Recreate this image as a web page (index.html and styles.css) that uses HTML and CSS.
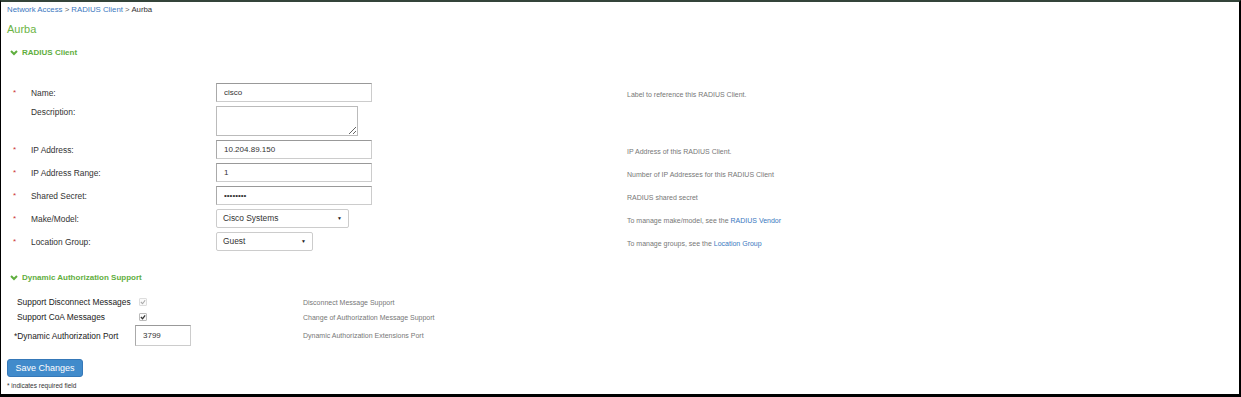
FILE: index.html
```html
<!DOCTYPE html>
<html lang="en">
<head>
  <meta charset="UTF-8" />
  <title>RADIUS Client - Aurba</title>
  <link rel="stylesheet" href="styles.css">
</head>
<body>
  <div class="frame">
    <div class="page">
      <div class="crumbs">
        <a href="#">Network Access</a> &gt; <a href="#">RADIUS Client</a> &gt; <span class="current">Aurba</span>
      </div>
      <h1 class="title">Aurba</h1>

      <!-- RADIUS client section -->
      <h2 class="section">
        <svg class="chev" width="8" height="6" viewBox="0 0 8 6"><path d="M1 1 L4 4 L7 1" fill="none" stroke="#5fae3e" stroke-width="2"/></svg>
        RADIUS Client
      </h2>

      <div class="form-grid">
        <span class="req">*</span>
        <label class="lbl">Name:</label>
        <div class="ctl"><input class="field w156" type="text" value="cisco"></div>
        <div class="help">Label to reference this RADIUS Client.</div>

        <span class="req"></span>
        <label class="lbl top">Description:</label>
        <div class="ctl"><textarea class="field area"></textarea></div>
        <div class="help"></div>

        <span class="req">*</span>
        <label class="lbl">IP Address:</label>
        <div class="ctl"><input class="field w156" type="text" value="10.204.89.150"></div>
        <div class="help">IP Address of this RADIUS Client.</div>

        <span class="req">*</span>
        <label class="lbl">IP Address Range:</label>
        <div class="ctl"><input class="field w156" type="text" value="1"></div>
        <div class="help">Number of IP Addresses for this RADIUS Client</div>

        <span class="req">*</span>
        <label class="lbl">Shared Secret:</label>
        <div class="ctl"><input class="field w156" type="password" value="cisco123"></div>
        <div class="help">RADIUS shared secret</div>

        <span class="req">*</span>
        <label class="lbl">Make/Model:</label>
        <div class="ctl"><div class="select w133">Cisco Systems<span class="arrow">&#9660;</span></div></div>
        <div class="help">To manage make/model, see the <a href="#">RADIUS Vendor</a></div>

        <span class="req">*</span>
        <label class="lbl">Location Group:</label>
        <div class="ctl"><div class="select w97">Guest<span class="arrow">&#9660;</span></div></div>
        <div class="help">To manage groups, see the <a href="#">Location Group</a></div>
      </div>

      <!-- Dynamic authorization section -->
      <h2 class="section das-head">
        <svg class="chev" width="8" height="6" viewBox="0 0 8 6"><path d="M1 1 L4 4 L7 1" fill="none" stroke="#5fae3e" stroke-width="2"/></svg>
        Dynamic Authorization Support
      </h2>

      <div class="das-grid">
        <div class="das-lbl">Support Disconnect Messages</div>
        <div class="das-ctl"><span class="check disabled"><svg width="7" height="6" viewBox="0 0 7 6"><path d="M1 3 L3 5 L6 1" fill="none" stroke="#aaa" stroke-width="1.3"/></svg></span></div>
        <div class="das-help">Disconnect Message Support</div>

        <div class="das-lbl">Support CoA Messages</div>
        <div class="das-ctl"><span class="check"><svg width="7" height="6" viewBox="0 0 7 6"><path d="M1 3 L3 5 L6 1" fill="none" stroke="#333" stroke-width="1.4"/></svg></span></div>
        <div class="das-help">Change of Authorization Message Support</div>

        <div class="das-lbl port">*Dynamic Authorization Port</div>
        <div class="das-ctl"><input class="field port-in" type="text" value="3799"></div>
        <div class="das-help">Dynamic Authorization Extensions Port</div>
      </div>

      <button class="btn">Save Changes</button>
      <p class="note">* indicates required field</p>
    </div>
  </div>
</body>
</html>
```

FILE: styles.css
```css
/* Reset */
* {
  margin: 0;
  padding: 0;
  box-sizing: border-box;
}

body {
  font-family: 'Liberation Sans', Arial, sans-serif;
  color: #333;
  background: #fff;
}

a {
  color: #3a78c0;
  text-decoration: none;
}

/* Screenshot frame */
.frame {
  width: 1241px;
  height: 397px;
  border-top: 2px solid #34443a;
  border-left: 1px solid #000;
  border-right: 2px solid #000;
  border-bottom: 3px solid #000;
  overflow: hidden;
}
.page {
  padding: 2px 6px 0;
}

/* Header */
.crumbs {
  font-size: 7.8px;
  line-height: 12px;
  color: #666;
}
.crumbs .current { color: #333; }

.title {
  margin-top: 6px;
  font-size: 11px;
  line-height: 14px;
  font-weight: normal;
  color: #6cb446;
}

.section {
  display: flex;
  align-items: center;
  gap: 4px;
  margin-top: 11px;
  padding-left: 3px;
  font-size: 8px;
  line-height: 12px;
  font-weight: bold;
  color: #5fae3e;
}
.chev { flex: none; }

/* RADIUS client form */
.form-grid {
  display: grid;
  grid-template-columns: 24px 185px 411px 1fr;
  row-gap: 4px;
  margin-top: 24px;
  align-items: center;
}
.req {
  padding-left: 6px;
  font-size: 8px;
  color: #c33;
  align-self: center;
}
.lbl {
  font-size: 8.4px;
  color: #333;
}
.lbl.top {
  align-self: start;
  padding-top: 1px;
}
.help {
  padding-top: 3px;
  font-size: 7px;
  color: #777;
  white-space: nowrap;
}

.field {
  display: block;
  height: 19px;
  border: 1px solid #ccc;
  border-top-color: #999;
  border-left-color: #aaa;
  padding: 0 7px;
  font-family: inherit;
  font-size: 8px;
  color: #333;
  background: #fff;
  outline: none;
}
.w156 { width: 156px; }
.area {
  width: 142px;
  height: 30px;
  resize: both;
  border-color: #bbb;
}

.select {
  position: relative;
  height: 19px;
  border: 1px solid #ccc;
  border-radius: 2px;
  padding-left: 6px;
  font-size: 8.4px;
  line-height: 17px;
  color: #333;
  background: #fff;
}
.w133 { width: 133px; }
.w97 { width: 97px; }
.arrow {
  position: absolute;
  right: 6px;
  top: 0;
  font-size: 5px;
  color: #222;
}

/* Dynamic authorization */
.das-head { margin-top: 21px; }

.das-grid {
  display: grid;
  grid-template-columns: 128px 168px 1fr;
  grid-template-rows: 14px 14px 21px;
  row-gap: 1px;
  margin-top: 11px;
  align-items: center;
}
.das-lbl {
  padding-left: 10px;
  font-size: 8.4px;
  color: #222;
  white-space: nowrap;
}
.das-lbl.port { padding-left: 7px; }
.das-help {
  font-size: 7px;
  color: #777;
  white-space: nowrap;
}
.das-ctl { display: flex; align-items: center; }

.check {
  display: flex;
  align-items: center;
  justify-content: center;
  width: 8px;
  height: 8px;
  margin-left: 4px;
  border: 1px solid #bbb;
  border-radius: 1px;
  background: #fafafa;
}
.check.disabled { border-color: #ddd; }

.port-in {
  width: 56px;
  height: 21px;
}

/* Footer */
.btn {
  display: block;
  margin-top: 13px;
  width: 76px;
  height: 18px;
  border: 1px solid #3578b8;
  border-radius: 3px;
  background: #418bcb;
  color: #fff;
  font-family: inherit;
  font-size: 9px;
}
.note {
  margin-top: 4px;
  font-size: 6.5px;
  line-height: 10px;
  color: #333;
}
```
